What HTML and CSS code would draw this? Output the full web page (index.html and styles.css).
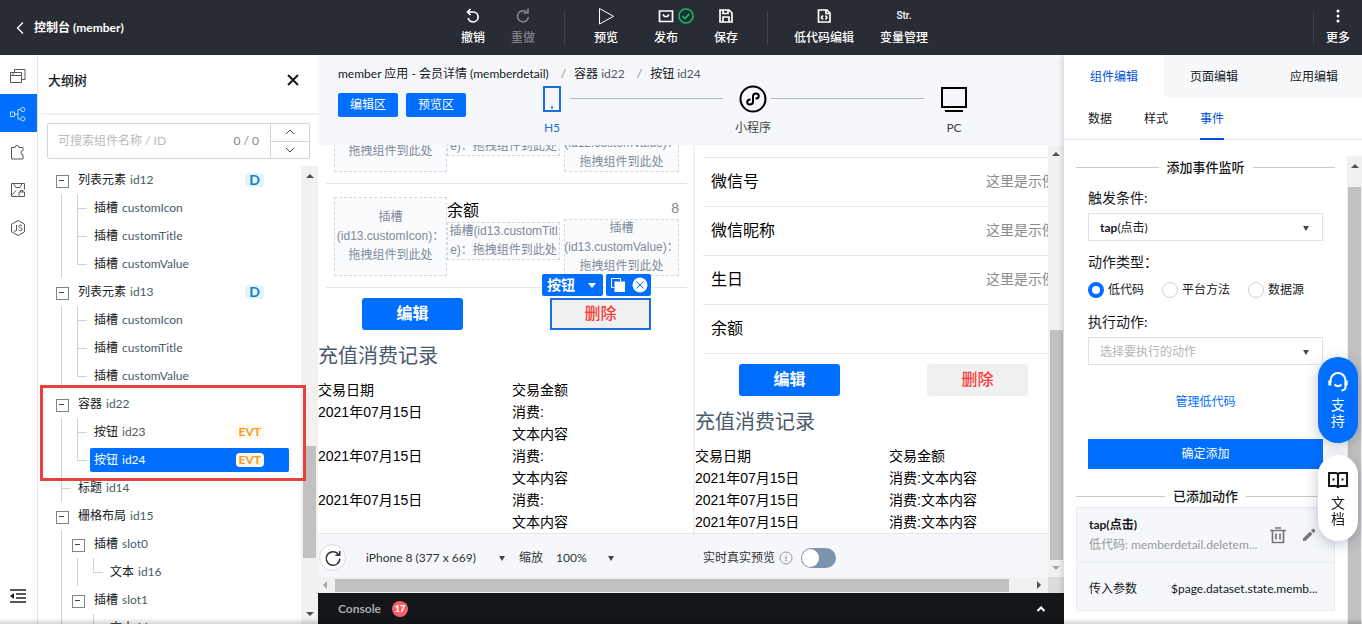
FILE: index.html
```html
<!DOCTYPE html>
<html lang="zh-CN">
<head>
<meta charset="utf-8">
<title>控制台 (member)</title>
<link rel="stylesheet" href="styles.css">
</head>
<body>
<header class="topbar">
  <a class="back" href="#">
    <svg width="8" height="14" viewBox="0 0 8 14"><path d="M7 1.500 1.500 7 7 12.500"/></svg>
    <span>控制台 (member)</span>
  </a>
  <nav class="tools">
    <button class="tool narrow"><svg width="18" height="18" viewBox="0 0 18 18"><path class="s2" d="M4 5H9.500a5 5 0 1 1-5.300 6M6.500 2 3.500 5l3 3"/></svg>撤销</button>
    <button class="tool narrow disabled"><svg width="18" height="18" viewBox="0 0 18 18"><path class="s2" d="M12.500 5A5.500 5.500 0 1 0 14.500 10M14 1.500V6h-4.500"/></svg>重做</button>
    <span class="rule"></span>
    <button class="tool"><svg width="18" height="18" viewBox="0 0 18 18"><path d="M2.500 1.500v15.500L16.500 9.300z"/></svg>预览</button>
    <button class="tool publish"><svg width="18" height="18" viewBox="0 0 18 18"><path class="s2" d="M2.500 4h13v10.500h-13zM6 7.500l1.500 2h3l1.500-2"/></svg><svg class="ok" width="16" height="16" viewBox="0 0 16 16"><circle cx="8" cy="8" r="7"/><path d="M4.500 8.200 7 10.600l4.300-4.700"/></svg>发布</button>
    <button class="tool"><svg width="18" height="18" viewBox="0 0 18 18"><path class="s2" d="M3 3h9l3 3v9H3zM6 15v-5h6v5M6 3v3.500h5V3"/></svg>保存</button>
    <span class="rule"></span>
    <button class="tool wide"><svg width="18" height="18" viewBox="0 0 18 18"><path class="s2" d="M3.500 3h8.500l3 3v9H3.500zM8 8.500 6.500 10.500 8 12.500M10.500 8.500l1.500 2-1.500 2M11 3v3.500h4"/></svg>低代码编辑</button>
    <button class="tool wide"><span class="str">Str.</span>变量管理</button>
  </nav>
  <span class="rule far"></span>
  <button class="tool more"><svg width="18" height="18" viewBox="0 0 18 18"><g class="dots"><circle cx="9" cy="4" r="1.500"/><circle cx="9" cy="9" r="1.500"/><circle cx="9" cy="14" r="1.500"/></g></svg>更多</button>
</header>

<main class="workspace">
  <nav class="rail">
    <button aria-label="页面"><svg width="18" height="18" viewBox="0 0 18 18"><path d="M1.500 5.500h11v10h-11zM1.500 8.500h11M3 7h2M5.500 5V2.500h10.500v10h-3"/></svg></button>
    <button class="active" aria-label="大纲树"><svg width="18" height="18" viewBox="0 0 18 18"><path d="M1.500 7h4v4.500h-4zM5.500 9.200h3.500M11.500 4.500H9v9.500h2.500"/><circle cx="13.800" cy="4.500" r="2.100"/><circle cx="13.800" cy="13.800" r="2.100"/></svg></button>
    <button aria-label="组件"><svg width="18" height="18" viewBox="0 0 18 18"><path d="M2.500 4.500h3.500a2 2 0 1 1 4 0h4v3.200a2 2 0 1 0 0 4v4.300H2.500z"/></svg></button>
    <button aria-label="素材"><svg width="18" height="18" viewBox="0 0 18 18"><path d="M9.500 15.500h-7v-13h13v6M4.500 2.500l2.500 4h4l2-4M2.500 14.500l4.500-5M10 11h5.500v4.500H10zM11.500 11V9.500h2.500V11"/></svg></button>
    <button aria-label="脚本"><svg width="18" height="18" viewBox="0 0 18 18"><path d="M9 1.500l6.500 3.700v7.600L9 16.500l-6.500-3.700V5.200zM7.500 6v5a1.500 1.500 0 0 1-2.800.5M13 6.800c-1.200-1.300-3.500-.8-3.300.7.200 1.600 3.500.9 3.500 2.800 0 1.700-2.800 1.900-3.700.5"/></svg></button>
    <button class="fold" aria-label="收起"><svg width="18" height="16" viewBox="0 0 18 16"><path class="s2" d="M1 2h16M7 6h10M7 10h10M1 14h16"/><path class="fill" d="M1 8l4-3v6z"/></svg></button>
  </nav>

  <aside class="outline">
    <div class="outline-head"><h2>大纲树</h2><button class="close" aria-label="关闭"><svg width="12" height="12" viewBox="0 0 12 12"><path d="M1 1l10 10M11 1 1 11"/></svg></button></div>
    <div class="search">
      <input type="text" aria-label="搜索组件" placeholder="可搜索组件名称 / ID">
      <span class="count">0 / 0</span>
      <div class="updown">
        <button aria-label="上一个"><svg width="10" height="6" viewBox="0 0 10 6"><path d="M1 5l4-4 4 4"/></svg></button>
        <button aria-label="下一个"><svg width="10" height="6" viewBox="0 0 10 6"><path d="M1 1l4 4 4-4"/></svg></button>
      </div>
    </div>
    <div class="tree-wrap">
      <div class="tree">
        <div class="row"><button class="cell box" aria-label="折叠"></button><span class="label">列表元素 <i>id12</i><b class="d">D</b></span></div>
        <div class="row"><span class="cell v"></span><span class="cell v h"></span><span class="label">插槽 <i>customIcon</i></span></div>
        <div class="row"><span class="cell v"></span><span class="cell v h"></span><span class="label">插槽 <i>customTitle</i></span></div>
        <div class="row"><span class="cell v"></span><span class="cell v h last"></span><span class="label">插槽 <i>customValue</i></span></div>
        <div class="row"><button class="cell box" aria-label="折叠"></button><span class="label">列表元素 <i>id13</i><b class="d">D</b></span></div>
        <div class="row"><span class="cell v"></span><span class="cell v h"></span><span class="label">插槽 <i>customIcon</i></span></div>
        <div class="row"><span class="cell v"></span><span class="cell v h"></span><span class="label">插槽 <i>customTitle</i></span></div>
        <div class="row"><span class="cell v"></span><span class="cell v h last"></span><span class="label">插槽 <i>customValue</i></span></div>
        <div class="marked">
          <div class="row"><button class="cell box" aria-label="折叠"></button><span class="label">容器 <i>id22</i></span></div>
          <div class="row"><span class="cell v"></span><span class="cell v h"></span><span class="label">按钮 <i>id23</i><b class="evt">EVT</b></span></div>
          <div class="row"><span class="cell v"></span><span class="cell v h last"></span><span class="label selected">按钮 <i>id24</i><b class="evt">EVT</b></span></div>
        </div>
        <div class="row"><span class="cell v h"></span><span class="label">标题 <i>id14</i></span></div>
        <div class="row"><button class="cell box" aria-label="折叠"></button><span class="label">栅格布局 <i>id15</i></span></div>
        <div class="row"><span class="cell v"></span><button class="cell box" aria-label="折叠"></button><span class="label">插槽 <i>slot0</i></span></div>
        <div class="row"><span class="cell v"></span><span class="cell v"></span><span class="cell v h last"></span><span class="label">文本 <i>id16</i></span></div>
        <div class="row"><span class="cell v"></span><button class="cell box" aria-label="折叠"></button><span class="label">插槽 <i>slot1</i></span></div>
        <div class="row"><span class="cell v"></span><span class="cell"></span><span class="cell v h last"></span><span class="label">文本 <i>id17</i></span></div>
      </div>
      <div class="vbar tree-bar"><span class="up"></span><span class="thumb"></span><span class="down"></span></div>
    </div>
  </aside>

  <section class="center">
    <div class="stage">
      <div class="stage-head">
        <div class="crumbs"><span>member 应用 - 会员详情 (memberdetail)</span><em>/</em><span>容器 <i>id22</i></span><em>/</em><span>按钮 <i>id24</i></span></div>
        <div class="modes">
          <button class="mode">编辑区</button><button class="mode">预览区</button>
          <div class="steps">
            <button class="step on"><svg width="28" height="28" viewBox="0 0 28 28"><path d="M6 2h16v24H6z"/><path d="M13 22.500h2"/></svg>H5</button>
            <span class="line"></span>
            <button class="step"><svg width="28" height="28" viewBox="0 0 28 28"><circle cx="14" cy="14" r="12.500"/><path d="M11.500 14.500c-2 0-3.300 1.200-3.300 2.600 0 1.500 1.200 2.500 2.800 2.500 1.800 0 3-1.200 3-3v-5.200c0-1.800 1.200-3 3-3 1.600 0 2.800 1 2.800 2.500 0 1.400-1.300 2.600-3.300 2.600"/></svg>小程序</button>
            <span class="line"></span>
            <button class="step"><svg width="28" height="28" viewBox="0 0 28 28"><path d="M2 3h24v19H2zM5 26h18"/></svg>PC</button>
          </div>
        </div>
      </div>
      <div class="view">
        <div class="phone">
          <div class="screen">
            <div class="item">
              <div class="slot tall">插槽<br>(id12.customIcon)：<br>拖拽组件到此处</div>
              <div class="mid"><span class="name">余额</span><div class="slot">插槽(id12.customTitl<br>e)：拖拽组件到此处</div></div>
              <div class="end"><span class="num">8</span><div class="slot">插槽<br>(id12.customValue)：<br>拖拽组件到此处</div></div>
            </div>
            <div class="item">
              <div class="slot tall">插槽<br>(id13.customIcon)：<br>拖拽组件到此处</div>
              <div class="mid"><span class="name">余额</span><div class="slot">插槽(id13.customTitl<br>e)：拖拽组件到此处</div></div>
              <div class="end"><span class="num">8</span><div class="slot">插槽<br>(id13.customValue)：<br>拖拽组件到此处</div></div>
            </div>
            <div class="actions">
              <button class="edit">编辑</button>
              <div class="picked">
                <div class="picktools"><button class="kind">按钮<span class="tri"></span></button><span class="ops"><svg width="16" height="16" viewBox="0 0 16 16"><path class="o" d="M4 10.500H1.500v-9h9V4"/><path class="f" d="M4.500 4.500H15V15H4.500z"/></svg><svg width="16" height="16" viewBox="0 0 16 16"><circle class="f" cx="8" cy="8" r="7.500"/><path class="x" d="M4.500 4.500l7 7M11.500 4.500l-7 7"/></svg></span></div>
                <button class="del">删除</button>
              </div>
            </div>
            <h3>充值消费记录</h3>
            <table>
              <tr><th>交易日期</th><th>交易金额</th></tr>
              <tr><td>2021年07月15日</td><td>消费:<br>文本内容</td></tr>
              <tr><td>2021年07月15日</td><td>消费:<br>文本内容</td></tr>
              <tr><td>2021年07月15日</td><td>消费:<br>文本内容</td></tr>
            </table>
          </div>
        </div>
        <div class="phone second">
          <div class="screen">
            <div class="field"><span>性别</span><span>这里是示例</span></div>
            <div class="field"><span>微信号</span><span>这里是示例</span></div>
            <div class="field"><span>微信昵称</span><span>这里是示例</span></div>
            <div class="field"><span>生日</span><span>这里是示例</span></div>
            <div class="field"><span>余额</span></div>
            <div class="actions">
              <button class="edit">编辑</button>
              <button class="del">删除</button>
            </div>
            <h3>充值消费记录</h3>
            <table>
              <tr><th>交易日期</th><th>交易金额</th></tr>
              <tr><td>2021年07月15日</td><td>消费:文本内容</td></tr>
              <tr><td>2021年07月15日</td><td>消费:文本内容</td></tr>
              <tr><td>2021年07月15日</td><td>消费:文本内容</td></tr>
            </table>
          </div>
        </div>
        <div class="vbar view-bar"><span class="up"></span><span class="thumb"></span><span class="down"></span></div>
        <div class="device">
          <button class="refresh" aria-label="刷新"><svg width="18" height="18" viewBox="0 0 18 18"><path d="M14.500 5.500A6.800 6.800 0 1 0 15.800 9.500M15.700 2v4.300h-4.300"/></svg></button>
          <span class="pick phone-pick"><select aria-label="设备"><option>iPhone 8 (377 x 669)</option></select></span>
          <label for="zoom">缩放</label>
          <span class="pick zoom-pick"><select id="zoom"><option>100%</option></select></span>
          <label class="live" for="live">实时真实预览</label>
          <svg class="info" width="14" height="14" viewBox="0 0 14 14"><circle cx="7" cy="7" r="6"/><path d="M7.600 3.300v1M5.800 6h1.600l-.8 4h1.400"/></svg>
          <input class="switch" type="checkbox" id="live">
        </div>
      </div>
      <div class="hbar"><span class="left"></span><span class="track"><span class="thumb"></span></span><span class="right"></span><span class="corner"></span></div>
    </div>
    <footer class="console"><span>Console</span><b>17</b><svg width="10" height="6" viewBox="0 0 10 6"><path d="M1.500 5 5 1.500 8.500 5"/></svg></footer>
  </section>

  <aside class="props">
    <nav class="tabs"><button class="active">组件编辑</button><button>页面编辑</button><button>应用编辑</button></nav>
    <nav class="subtabs"><button>数据</button><button>样式</button><button class="active">事件</button></nav>
    <div class="props-body">
      <div class="form">
        <h4>添加事件监听</h4>
        <div class="fields">
          <label for="trigger">触发条件:</label>
          <button class="combo" id="trigger"><span><b>tap</b>(点击)</span></button>
          <span class="cap">动作类型：</span>
          <div class="radios">
            <label><input type="radio" name="kind" checked>低代码</label>
            <label><input type="radio" name="kind">平台方法</label>
            <label><input type="radio" name="kind">数据源</label>
          </div>
          <label for="action">执行动作:</label>
          <button class="combo empty" id="action"><span>选择要执行的动作</span></button>
          <a href="#">管理低代码</a>
          <button class="submit">确定添加</button>
        </div>
        <h4>已添加动作</h4>
        <div class="card">
          <div class="card-top">
            <div class="desc"><b>tap(点击)</b><span>低代码: memberdetail.deletem...</span></div>
            <button aria-label="删除"><svg width="18" height="18" viewBox="0 0 18 18"><path class="s2" d="M1 4.500h16M6 2h6M3.500 5v11.500h11V5M7 7.500v6M11 7.500v6"/></svg></button>
            <button aria-label="编辑"><svg width="14" height="14" viewBox="0 0 14 14"><path class="fill" d="M1 13v-2.500l7-7L10.500 6l-7 7zM9 2.500 10.500 1a1 1 0 0 1 1.400 0l1.100 1.100a1 1 0 0 1 0 1.400L11.500 5z"/></svg></button>
          </div>
          <div class="card-row"><span>传入参数</span><span>$page.dataset.state.memb...</span></div>
        </div>
      </div>
      <div class="vbar props-bar"><span class="up"></span><span class="thumb"></span></div>
    </div>
  </aside>
</main>

<div class="floats">
  <button class="pill blue"><svg width="22" height="22" viewBox="0 0 22 22"><path d="M3.500 11V9.500a7.500 7.500 0 0 1 15 0V16q0 3-4 3.500M7.500 13.500q3.500 3.200 7 0"/><path class="bold" d="M2.800 9.500v5M19.200 9.500v5"/></svg><span>支</span><span>持</span></button>
  <button class="pill"><svg width="22" height="22" viewBox="0 0 22 22"><path d="M2 4h6.500q2.500 0 2.500 2 0-2 2.500-2H20v13h-6.500q-2.500 0-2.500 2 0-2-2.500-2H2zM11 6v12M5.500 10.500h2M14.500 10.500h2"/></svg><span>文</span><span>档</span></button>
</div>
</body>
</html>
```

FILE: styles.css
```css
* { box-sizing: border-box; }
body {
  margin: 0;
  height: 100vh;
  display: flex;
  flex-direction: column;
  overflow: hidden;
  font: 12px/20px Lato, "Noto Sans CJK SC", sans-serif;
  color: #16181c;
  background: #fff;
}
body::after {
  content: "";
  position: fixed;
  inset: auto 0 0 0;
  height: 6px;
  background: linear-gradient(transparent, rgba(0, 0, 0, .16));
  pointer-events: none;
}
button, input, select { font: inherit; color: inherit; margin: 0; }
button { padding: 0; border: 0; background: none; }
svg { display: block; fill: none; stroke: currentColor; flex: none; }
.s2 { stroke-width: 1.700; }
.fill { fill: currentColor; stroke: none; }
h2, h3, h4 { margin: 0; }
i, em { font-style: normal; }
a { text-decoration: none; }

/* top bar */
.topbar {
  height: 55px;
  flex: none;
  display: flex;
  align-items: center;
  background: #282c34;
  color: #fff;
}
.back {
  width: 448px;
  padding-left: 16px;
  display: flex;
  align-items: center;
  gap: 10px;
  color: #fff;
  font-weight: 700;
}
.back svg { stroke-width: 1.300; }
.tools { display: flex; align-items: center; }
.tool {
  width: 60px;
  position: relative;
  display: flex;
  flex-direction: column;
  align-items: center;
  gap: 3px;
  font-weight: 500;
  line-height: 20px;
}
.narrow { width: 50px; }
.wide { width: 80px; }
.disabled { color: #7d8087; }
.ok { position: absolute; left: 42px; top: 1px; stroke: #0abf6b; stroke-width: 1.600; }
.str { font: 500 10px/18px Roboto, sans-serif; }
.dots { fill: #fff; stroke: none; }
.rule { width: 1px; height: 34px; margin: 0 11px 0 16px; background: #3d424b; }
.rule ~ .rule { margin: 0 16px 0 11px; }
.topbar > .far { margin: 0 0 0 auto; }
.more { width: 48px; }

/* workspace */
.workspace { flex: 1; min-height: 0; display: flex; }
.rail {
  width: 38px;
  flex: none;
  border-right: 1px solid #e3e5e8;
  padding-top: 1px;
  display: flex;
  flex-direction: column;
  color: #55585e;
}
.rail button { height: 38px; padding: 2px 0 0 9px; flex: none; }
.rail .active { background: #006eff; color: #bfe0ff; }
.rail .fold { margin-top: auto; margin-bottom: 10px; color: #222; }

/* outline panel */
.outline { width: 280px; flex: none; display: flex; flex-direction: column; position: relative; }
.outline-head {
  height: 60px;
  flex: none;
  margin-left: 3px;
  padding: 0 19px 8px 7px;
  display: flex;
  align-items: center;
  justify-content: space-between;
  border-bottom: 2px solid #eff0f2;
}
.outline-head h2 { font-size: 13px; line-height: 20px; font-weight: 500; }
.close svg { stroke-width: 2; }
.search {
  height: 36px;
  flex: none;
  margin: 8px 8px 7px 9px;
  display: flex;
  align-items: center;
  border: 1px solid #cfd5de;
  border-radius: 2px;
  color: #888;
}
.search input { flex: 1; min-width: 0; padding: 0 0 0 10px; border: 0; outline: 0; background: none; }
.search input::placeholder { color: #bbb; opacity: 1; }
.count { padding-right: 11px; }
.updown { width: 39px; height: 100%; display: flex; flex-direction: column; border-left: 1px solid #cfd5de; color: #444; }
.updown button { flex: 1; display: flex; align-items: center; justify-content: center; }
.updown button + button { border-top: 1px solid #cfd5de; }
.tree-wrap { flex: 1; min-height: 0; overflow: hidden; display: flex; }
.tree { flex: 1; min-width: 0; }
.row { height: 28px; padding: 2px 12px 2px 16px; display: flex; align-items: stretch; }
.cell { width: 16px; flex: none; position: relative; }
.cell::before, .cell::after { content: ""; position: absolute; background: #d0d2d6; }
.v::before { left: 7px; top: -2px; bottom: -2px; width: 1px; }
.last::before { bottom: 11px; }
.h::after { left: 8px; top: 12px; width: 9px; height: 1px; }
.box::before { left: 2px; top: 7px; width: 11px; height: 11px; border: 1px solid #7f8388; background: #fff; }
.box::after { left: 5px; top: 12px; width: 5px; height: 1px; background: #444; }
.label {
  flex: 1;
  margin-left: 4px;
  padding: 0 25px 0 4px;
  display: flex;
  align-items: center;
  gap: 4px;
  border-radius: 2px;
}
.label i, .crumbs i { color: #4b5b66; }
.label b { margin-left: auto; border-radius: 4px; line-height: 14px; }
.d { padding: 0 4px; font-size: 14px; background: #e0f4fd; color: #1480bd; }
.evt { padding: 0 3px; font-size: 12px; background: #fff8ec; color: #f79a27; }
.selected, .selected i { color: #fff; }
.selected { background: #006eff; }
.marked { position: relative; }
.marked::after {
  content: "";
  position: absolute;
  inset: -5px -5px -7px 2px;
  border: 3px solid #ea3f3f;
  z-index: 2;
}

/* scroll bars */
.vbar { width: 16px; flex: none; background: #f1f1f1; display: flex; flex-direction: column; align-items: center; }
.vbar .up, .vbar .down { border: 4px solid transparent; }
.vbar .up { border-bottom: 4px solid #505050; border-top: 0; margin: 8px 0; }
.vbar .down { border-top: 4px solid #505050; border-bottom: 0; margin: auto 0 8px; }
.thumb { background: #c1c1c1; }
.vbar .thumb { width: 13px; }
.tree-bar { width: 17px; }
.tree-bar .thumb { flex: none; height: 112px; margin-top: 260px; }

/* center */
.center { flex: 1; min-width: 0; display: flex; flex-direction: column; }
.stage { flex: 1; min-height: 0; display: flex; flex-direction: column; }
.stage-head { flex: none; padding: 9px 92px 9px 20px; background: #f5f7fa; }
.crumbs { height: 21px; display: flex; white-space: nowrap; }
.crumbs em { padding: 0 8px 0 12px; color: #888; }
.modes { display: flex; align-items: flex-start; }
.mode { width: 60px; height: 24px; margin: 8px 8px 0 0; border-radius: 2px; background: #006eff; color: #fff; }
.steps { flex: 1; margin-left: 60px; display: flex; align-items: flex-start; }
.step { width: 36px; display: flex; flex-direction: column; align-items: center; gap: 7px; line-height: 16px; white-space: nowrap; color: #444; }
.step svg { stroke: #000; stroke-width: 2; }
.step.on { color: #1a6fe0; }
.step.on svg { stroke: #1a6fe0; }
.line { flex: 1; height: 1px; margin: 13px 12px 0 0; background: #b4b7bb; }
.view {
  flex: 1;
  min-height: 0;
  display: grid;
  grid-template-columns: 377px minmax(0, 1fr) 16px;
  grid-template-rows: minmax(0, 1fr) 44px;
}
.phone {
  overflow: hidden;
  display: flex;
  flex-direction: column;
  justify-content: flex-end;
  font-family: "Liberation Sans", "Noto Sans CJK SC", sans-serif;
  font-size: 14px;
  line-height: 22px;
  color: #000;
}
.second { box-shadow: -1px 0 2px #e4e4e4; }
.screen { width: 377px; flex: none; }
.item { height: 104px; margin: 0 8px; padding: 13px 8px; border-bottom: 1px solid #e6e6e6; display: flex; }
.mid { width: 113px; padding-top: 2px; }
.end { width: 115px; margin-left: auto; text-align: right; }
.name { display: block; font-size: 16px; line-height: 23px; }
.num { display: block; color: #888; }
.slot { outline: 1px dashed #d3d9e2; outline-offset: -1px; background: #fafbfd; font-size: 12px; line-height: 19px; text-align: center; color: #7d8a9a; white-space: nowrap; }
.tall { width: 113px; height: 79px; padding-top: 11px; }
.field { height: 49px; margin-left: 8px; padding: 0 16px 0 8px; display: flex; align-items: center; justify-content: space-between; border-bottom: 1px solid #e6e6e6; font-size: 16px; }
.field span + span { padding-bottom: 3px; font-size: 14px; color: #8c8c8c; }
.actions { padding: 10px 44px 0; display: flex; gap: 87px; font-size: 16px; font-weight: 700; }
.edit, .del { width: 101px; height: 32px; border-radius: 3px; background: #006eff; color: #fff; }
.del { background: #f0f0f0; color: #fa3b3b; font-weight: 500; }
.picked { position: relative; }
.picked .del { border: 2px solid #1a6fe0; border-radius: 0; }
.picktools { position: absolute; right: 0; bottom: 34px; display: flex; gap: 3px; font-size: 14px; color: #fff; }
.kind, .ops { height: 22px; background: #006eff; display: flex; align-items: center; border-radius: 2px; }
.kind { width: 61px; justify-content: space-between; padding: 0 7px 0 5px; }
.tri { border: 4px solid transparent; border-top: 5px solid #fff; border-bottom: 0; }
.ops { width: 45px; gap: 6px; padding: 0 4px; }
.f { fill: #fff; stroke: none; }
.x { stroke: #006eff; }
h3 { margin: 12px 0 9px; font-size: 20px; line-height: 28px; font-weight: 400; color: #4a5a6e; }
table { width: 100%; table-layout: fixed; border-collapse: collapse; }
th, td { padding: 0; text-align: left; font-weight: 400; vertical-align: top; }
th:first-child { width: 194px; }
.view-bar { grid-column: 3; grid-row: 1 / 3; }
.view-bar .up { margin-top: 7px; }
.view-bar .thumb { margin-top: 166px; flex: 1; }
.view-bar .down { margin: 6px 0 7px; border-top-color: #a3a3a3; }
.device {
  grid-column: 1 / 3;
  grid-row: 2;
  padding: 4px 0 0 1px;
  display: flex;
  align-items: center;
  border-top: 1px solid #e3e6ea;
  background: #f5f7fa;
  color: #333;
}
.refresh { width: 27px; height: 27px; display: flex; align-items: center; justify-content: center; border: 1px solid #d8dbe0; border-radius: 50%; background: #fff; }
.refresh svg { stroke-width: 1.500; }
.pick { position: relative; }
.pick select { width: 100%; appearance: none; padding: 0; border: 0; background: none; }
.pick::after, .combo::after { content: ""; border: 3px solid transparent; border-top: 5px solid #445; border-bottom: 0; }
.pick::after { position: absolute; right: 5px; top: 8px; }
.phone-pick { width: 144px; margin: 0 9px 0 20px; }
.zoom-pick { width: 63px; margin-left: 13px; }
.live { margin-left: 84px; }
.info { margin: 0 8px 0 4px; color: #999; }
.switch { appearance: none; width: 35px; height: 20px; border-radius: 10px; background: #7c93ad; display: flex; padding: 1px; }
.switch::before { content: ""; width: 17px; height: 18px; border-radius: 50%; background: #fff; }
.hbar { height: 16px; flex: none; display: flex; align-items: center; background: #f1f1f1; }
.hbar .left, .hbar .right { border: 4px solid transparent; }
.hbar .left { border-right: 4px solid #a3a3a3; border-left: 0; margin: 0 8px 0 5px; }
.hbar .right { border-left: 4px solid #505050; border-right: 0; margin: 0 7px; }
.track { flex: 1; }
.hbar .thumb { display: block; width: 97%; height: 13px; }
.corner { width: 16px; height: 16px; background: #dcdcdc; }
.console { height: 31px; flex: none; padding: 0 18px 0 20px; display: flex; align-items: center; background: #14171a; color: #a7a9ac; font-weight: 700; }
.console b { width: 16px; height: 16px; margin: 0 auto 0 11px; border-radius: 50%; background: #f75f66; color: #fff; font-size: 9px; line-height: 16px; text-align: center; }
.console svg { color: #fff; stroke-width: 2; }

/* properties panel */
.props { width: 298px; flex: none; display: flex; flex-direction: column; position: relative; box-shadow: -2px 0 5px rgba(0, 0, 0, .13); background: #fff; }
.tabs { height: 42px; flex: none; display: flex; background: #f7f8fa; }
.tabs button { width: 100px; flex: none; padding-top: 2px; }
.tabs .active { background: #fff; color: #0052d9; }
.subtabs { height: 43px; flex: none; padding-left: 24px; display: flex; gap: 32px; border-bottom: 1px solid #e3e6ea; }
.subtabs button { height: 43px; padding-top: 2px; border-bottom: 2px solid transparent; }
.subtabs .active { color: #0052d9; border-color: #0052d9; }
.props-body { flex: 1; min-height: 0; padding-top: 16px; display: flex; }
.form { flex: 1; min-width: 0; padding: 0 12px; }
h4 { display: flex; align-items: center; gap: 8px; font-size: 13px; line-height: 22px; font-weight: 500; }
h4::before, h4::after { content: ""; flex: 1; height: 1px; background: #c8cacd; }
.fields { padding: 10px 12px 16px; display: flex; flex-direction: column; }
.fields > label, .cap { font-size: 14px; line-height: 20px; }
.combo { height: 28px; margin: 5px 0 11px; padding: 2px 13px 0 11px; display: flex; align-items: center; justify-content: space-between; border: 1px solid #dfe2e7; }
.empty { color: #b5b5b5; margin-bottom: 27px; }
.radios { height: 40px; padding-bottom: 4px; display: flex; align-items: center; gap: 18px; }
.radios label { display: flex; align-items: center; gap: 4px; }
.radios input { appearance: none; width: 16px; height: 16px; border: 1px solid #cfd5de; border-radius: 50%; background: #fff; }
.radios input:checked { border: 4px solid #006eff; }
.fields a { align-self: center; color: #006eff; }
.submit { height: 30px; margin-top: 27px; background: #006eff; color: #fff; }
.card { border: 1px solid #e8ebef; border-radius: 2px; background: #f5f7fa; }
.card-top { height: 55px; padding: 0 18px 0 12px; display: flex; align-items: center; gap: 15px; border-bottom: 1px solid #e8ebef; color: #777; }
.desc { flex: 1; min-width: 0; display: flex; flex-direction: column; white-space: nowrap; color: #9a9a9a; }
.desc b { color: #16181c; }
.card-row { height: 47px; padding: 4px 12px 0; display: flex; align-items: center; gap: 34px; white-space: nowrap; }
.props-bar { width: 15px; }
.props-bar .thumb { flex: 1; margin-top: 11px; }

/* floating help */
.floats { position: fixed; right: 4px; top: 357px; display: flex; flex-direction: column; gap: 12px; }
.pill { width: 40px; height: 86px; padding: 14px 0; display: flex; flex-direction: column; align-items: center; border-radius: 20px; background: #fff; color: #16181c; box-shadow: 0 3px 14px rgba(20, 40, 80, .28); font-size: 14px; line-height: 16px; }
.pill svg { margin-bottom: 4px; stroke-width: 2; }
.blue { background: #006eff; color: #fff; }
.bold { stroke-width: 3; }
```
